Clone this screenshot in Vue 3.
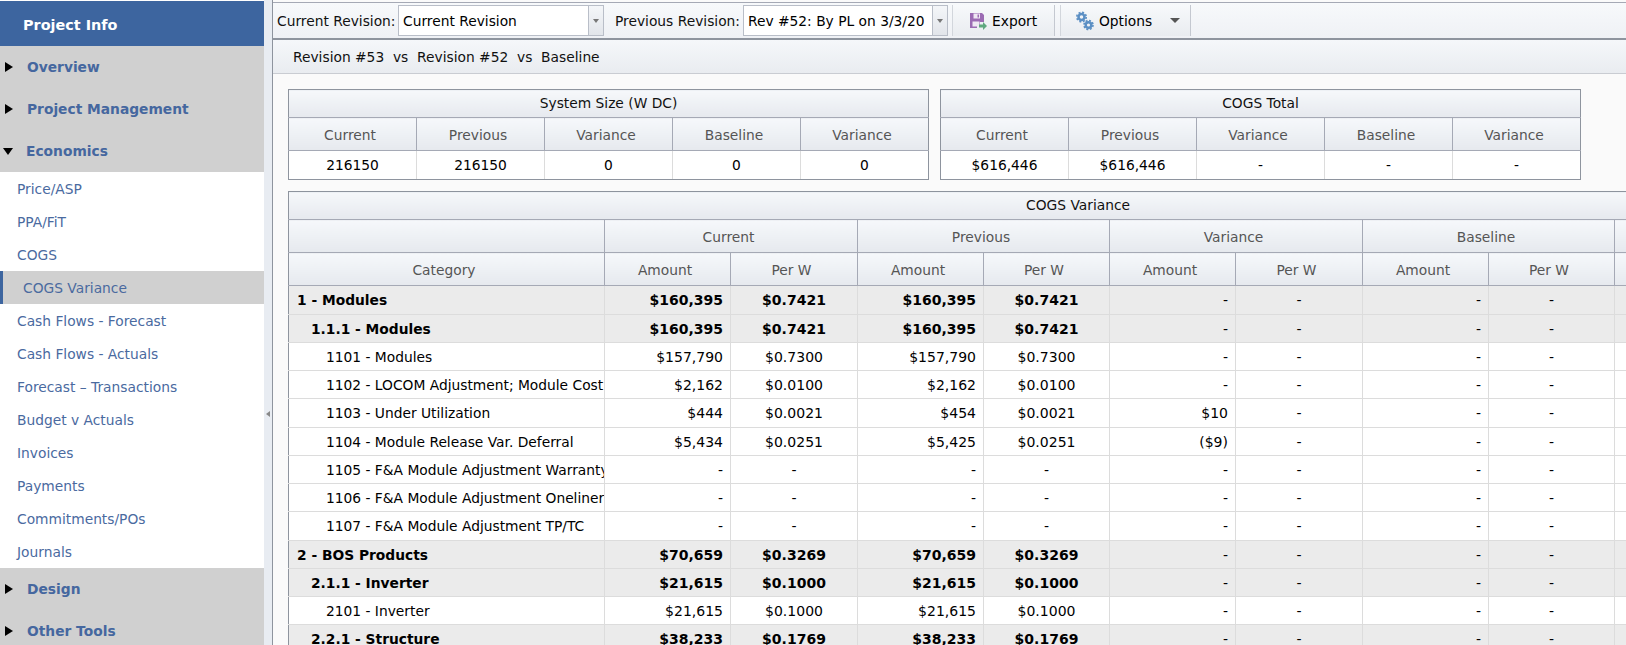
<script setup>
const before = ['Overview', 'Project Management']
const links = ['Price/ASP', 'PPA/FiT', 'COGS', 'COGS Variance', 'Cash Flows - Forecast', 'Cash Flows - Actuals', 'Forecast – Transactions', 'Budget v Actuals', 'Invoices', 'Payments', 'Commitments/POs', 'Journals']
const after = ['Design', 'Other Tools']
const sizeCols = ['Current', 'Previous', 'Variance', 'Baseline', 'Variance']
const groups = ['Current', 'Previous', 'Variance', 'Baseline']
const colWidths = [316, 126, 127, 126, 126, 126, 127, 126, 126, 126, 127]
const heading = 'Revision #53  vs  Revision #52  vs  Baseline'
const d = '-'
const rows = [
  { name: '1 - Modules', level: 0, cur: ['$160,395', '$0.7421'], prev: ['$160,395', '$0.7421'], vari: d, tall: true },
  { name: '1.1.1 - Modules', level: 1, cur: ['$160,395', '$0.7421'], prev: ['$160,395', '$0.7421'], vari: d },
  { name: '1101 - Modules', level: 2, cur: ['$157,790', '$0.7300'], prev: ['$157,790', '$0.7300'], vari: d },
  { name: '1102 - LOCOM Adjustment; Module Cost', level: 2, cur: ['$2,162', '$0.0100'], prev: ['$2,162', '$0.0100'], vari: d },
  { name: '1103 - Under Utilization', level: 2, cur: ['$444', '$0.0021'], prev: ['$454', '$0.0021'], vari: '$10', tall: true },
  { name: '1104 - Module Release Var. Deferral', level: 2, cur: ['$5,434', '$0.0251'], prev: ['$5,425', '$0.0251'], vari: '($9)' },
  { name: '1105 - F&A Module Adjustment Warranty', level: 2, cur: [d, d], prev: [d, d], vari: d },
  { name: '1106 - F&A Module Adjustment Oneliner', level: 2, cur: [d, d], prev: [d, d], vari: d },
  { name: '1107 - F&A Module Adjustment TP/TC', level: 2, cur: [d, d], prev: [d, d], vari: d, tall: true },
  { name: '2 - BOS Products', level: 0, cur: ['$70,659', '$0.3269'], prev: ['$70,659', '$0.3269'], vari: d },
  { name: '2.1.1 - Inverter', level: 1, cur: ['$21,615', '$0.1000'], prev: ['$21,615', '$0.1000'], vari: d },
  { name: '2101 - Inverter', level: 2, cur: ['$21,615', '$0.1000'], prev: ['$21,615', '$0.1000'], vari: d },
  { name: '2.2.1 - Structure', level: 1, cur: ['$38,233', '$0.1769'], prev: ['$38,233', '$0.1769'], vari: d }
]
const isDash = v => v === d
</script>

<template>
  <div class="page">
    <aside class="side">
      <div class="brand">Project Info</div>
      <div v-for="s in before" :key="s" class="sec"><i class="tri"></i><span>{{ s }}</span></div>
      <div class="sec"><i class="tri open"></i><span>Economics</span></div>
      <a v-for="l in links" :key="l" class="link" :class="{ active: l === 'COGS Variance' }">{{ l }}</a>
      <div v-for="s in after" :key="s" class="sec"><i class="tri"></i><span>{{ s }}</span></div>
    </aside>
    <div class="split"><i class="split-arrow"></i></div>
    <main class="main">
      <div class="toolbar">
        <label class="lbl first">Current Revision:</label>
        <div class="combo cur"><span>Current Revision</span><b class="trig"><i class="caret"></i></b></div>
        <label class="lbl second">Previous Revision:</label>
        <div class="combo prev"><span>Rev #52: By PL on 3/3/20</span><b class="trig"><i class="caret"></i></b></div>
        <div class="btn export">
          <svg width="18" height="18" viewBox="0 0 18 18">
            <path d="M1 1h12l2 2v7h-4v3H8v3H1z" fill="#9b6bb3"/>
            <rect x="4.500" y="1.500" width="6.500" height="5" fill="#efe8f3"/>
            <rect x="8.500" y="2.500" width="1.500" height="3" fill="#9b6bb3"/>
            <rect x="3.500" y="9.500" width="7" height="5" fill="#efe8f3"/>
            <path d="M10 12.500h4V10l4 4-4 4v-2.500h-4z" fill="#5fa87f"/>
          </svg>
          <span>Export</span>
        </div>
        <div class="btn options">
          <svg width="18" height="20" viewBox="0 0 18 20">
            <g fill="none" stroke="#5b8fc4">
              <circle cx="5.500" cy="6" r="3" stroke-width="2.500"/>
              <circle cx="5.500" cy="6" r="4.700" stroke-width="1.600" stroke-dasharray="2 1.700"/>
              <circle cx="12.500" cy="14" r="2.800" stroke-width="2.400"/>
              <circle cx="12.500" cy="14" r="4.500" stroke-width="1.600" stroke-dasharray="2 1.530"/>
            </g>
          </svg>
          <span>Options</span>
          <i class="btn-caret"></i>
        </div>
      </div>
      <section class="panel">
        <div class="title">{{ heading }}</div>
        <div class="body">
          <div class="summary">
            <table class="sum">
              <tbody>
                <tr class="h1"><th colspan="5">System Size (W DC)</th></tr>
                <tr class="h2"><th v-for="(c, i) in sizeCols" :key="i">{{ c }}</th></tr>
                <tr class="v"><td>216150</td><td>216150</td><td>0</td><td>0</td><td>0</td></tr>
              </tbody>
            </table>
            <table class="sum">
              <tbody>
                <tr class="h1"><th colspan="5">COGS Total</th></tr>
                <tr class="h2"><th v-for="(c, i) in sizeCols" :key="i">{{ c }}</th></tr>
                <tr class="v"><td>$616,446</td><td>$616,446</td><td>-</td><td>-</td><td>-</td></tr>
              </tbody>
            </table>
          </div>
          <table class="grid">
            <colgroup><col v-for="(w, i) in colWidths" :key="i" :style="{ width: w + 'px' }" /></colgroup>
            <thead>
              <tr class="h1"><th colspan="11">COGS Variance</th></tr>
              <tr class="h2"><th></th><th v-for="g in groups" :key="g" colspan="2">{{ g }}</th><th colspan="2"></th></tr>
              <tr class="h2">
                <th>Category</th>
                <template v-for="g in 4" :key="g"><th>Amount</th><th>Per W</th></template>
                <th></th><th></th>
              </tr>
            </thead>
            <tbody>
              <tr v-for="r in rows" :key="r.name" :class="{ strong: r.level < 2, tall: r.tall }">
                <td class="cat" :class="'lv' + r.level">{{ r.name }}</td>
                <td class="amt" :class="{ dash: isDash(r.cur[0]) }">{{ r.cur[0] }}</td>
                <td class="per" :class="{ dash: isDash(r.cur[1]) }">{{ r.cur[1] }}</td>
                <td class="amt" :class="{ dash: isDash(r.prev[0]) }">{{ r.prev[0] }}</td>
                <td class="per" :class="{ dash: isDash(r.prev[1]) }">{{ r.prev[1] }}</td>
                <td class="amt" :class="{ dash: isDash(r.vari) }">{{ r.vari }}</td>
                <td class="per dash">-</td>
                <td class="amt dash">-</td>
                <td class="per dash">-</td>
                <td></td><td></td>
              </tr>
            </tbody>
          </table>
        </div>
      </section>
    </main>
  </div>
</template>

<style>
html, body { margin: 0; background: #fff; overflow: hidden; }
</style>

<style scoped>
.page { display: flex; width: 1626px; height: 645px; overflow: hidden; font: 13.800px "DejaVu Sans", sans-serif; color: #000; background: #fff; }
.side { width: 264px; flex: none; padding-top: 1px; box-sizing: border-box; height: 645px; overflow: hidden; }
.brand { height: 45px; line-height: 48px; background: #3d659f; color: #fff; font-weight: bold; font-size: 14.400px; padding-left: 23px; }
.sec { height: 42px; display: flex; align-items: center; background: #d0d0d0; color: #45679f; font-weight: bold; font-size: 13.800px; }
.sec span { margin-left: 14px; }
.tri { width: 0; height: 0; margin-left: 5px; border-left: 8px solid #000; border-top: 5.500px solid transparent; border-bottom: 5.500px solid transparent; }
.tri.open { margin-left: 3px; border-left: 5.500px solid transparent; border-right: 5.500px solid transparent; border-top: 7px solid #000; border-bottom: 0; }
.tri.open + span { margin-left: 13px; }
.link { display: block; height: 33px; line-height: 35px; padding-left: 17px; color: #4a6a9f; box-sizing: border-box; }
.link.active { background: #d0d0d0; border-left: 3px solid #3d659f; padding-left: 20px; }
.split { width: 9px; flex: none; background: #e8ecf2; border-right: 1px solid #8e949e; box-sizing: border-box; display: flex; align-items: center; justify-content: center; }
.split-arrow { width: 0; height: 0; border-right: 4px solid #888; border-top: 3px solid transparent; border-bottom: 3px solid transparent; margin-top: 182px; }
.main { flex: 1; min-width: 0; overflow: hidden; background: #fafafa; }
.toolbar { height: 35px; margin-top: 2px; border-top: 1px solid #a5a9b5; border-bottom: 2px solid #8e949e; display: flex; align-items: center; background: linear-gradient(#f7f9fb, #eff1f5); padding-left: 4px; white-space: nowrap; }
.lbl { color: #111; }
.lbl.first { width: 121px; }
.lbl.second { margin-left: 11px; width: 128px; }
.combo { height: 31px; box-sizing: border-box; border: 1px solid #b9bec8; background: #fff; display: flex; align-items: center; padding-left: 4px; position: relative; overflow: hidden; }
.combo.cur { width: 206px; }
.combo.prev { width: 205px; }
.trig { position: absolute; right: 0; top: 0; bottom: 0; width: 14px; background: linear-gradient(#f4f6f9, #e2e5ea); border-left: 1px solid #b9bec8; display: flex; align-items: center; justify-content: center; }
.caret { width: 0; height: 0; border-left: 3.500px solid transparent; border-right: 3.500px solid transparent; border-top: 4px solid #777; }
.btn { height: 31px; box-sizing: border-box; display: flex; align-items: center; background: linear-gradient(#f7f9fb, #e9ecf0); border-left: 1px solid #d2d6dc; border-right: 1px solid #c4c8d0; }
.export { width: 103px; margin-left: 4px; padding-left: 16px; gap: 5px; }
.options { width: 131px; margin-left: 5px; padding-left: 15px; gap: 5px; }
.btn-caret { width: 0; height: 0; margin-left: 13px; border-left: 5px solid transparent; border-right: 5px solid transparent; border-top: 5px solid #555; }
.title { height: 34px; line-height: 35px; box-sizing: border-box; border-bottom: 1px solid #c9ccd2; padding-left: 20px; background: linear-gradient(#f5f7fa, #e9ecf0); white-space: pre; color: #111; }
.body { padding: 15px 0 0 15px; }
.summary { display: flex; gap: 11px; margin-bottom: 11px; }
table { border-collapse: collapse; table-layout: fixed; }
.sum { width: 641px; }
th { font-weight: normal; color: #555; background: linear-gradient(#f6f8fb, #e6e9ee); border: 1px solid #a5a9b5; padding: 0 5px 0 0; overflow: hidden; white-space: nowrap; }
.h1 th { height: 25px; color: #111; padding: 0 0 2px; border-top-color: #8e949e; border-left-color: #8e949e; border-right-color: #8e949e; }
.h2 th { height: 30px; padding-top: 2px; }
.h2 th:first-child { border-left-color: #8e949e; }
.sum .h2 th:last-child { border-right-color: #8e949e; }
.v td { height: 28px; text-align: center; border: 1px solid #dcdcdc; border-bottom-color: #8e949e; background: #fff; padding: 0; }
.v td:first-child { border-left-color: #8e949e; }
.v td:last-child { border-right-color: #8e949e; }
.grid { width: 1579px; }
.grid td { height: 27px; padding: 0; border: 1px solid #dcdcdc; background: #fff; overflow: hidden; white-space: nowrap; }
.grid td:first-child { border-left-color: #8e949e; }
.grid .tall td { height: 28px; }
.grid .strong td { background: #ebebeb; font-weight: bold; font-size: 13.800px; }
.cat.lv0 { padding-left: 8px; }
.cat.lv1 { padding-left: 22px; }
.cat.lv2 { padding-left: 37px; }
.grid td.amt { text-align: right; padding-right: 7px; box-sizing: border-box; font-size: 14px; }
.grid td.per { text-align: center; font-size: 14px; }
.grid .strong td.dash { font-weight: normal; }
</style>
